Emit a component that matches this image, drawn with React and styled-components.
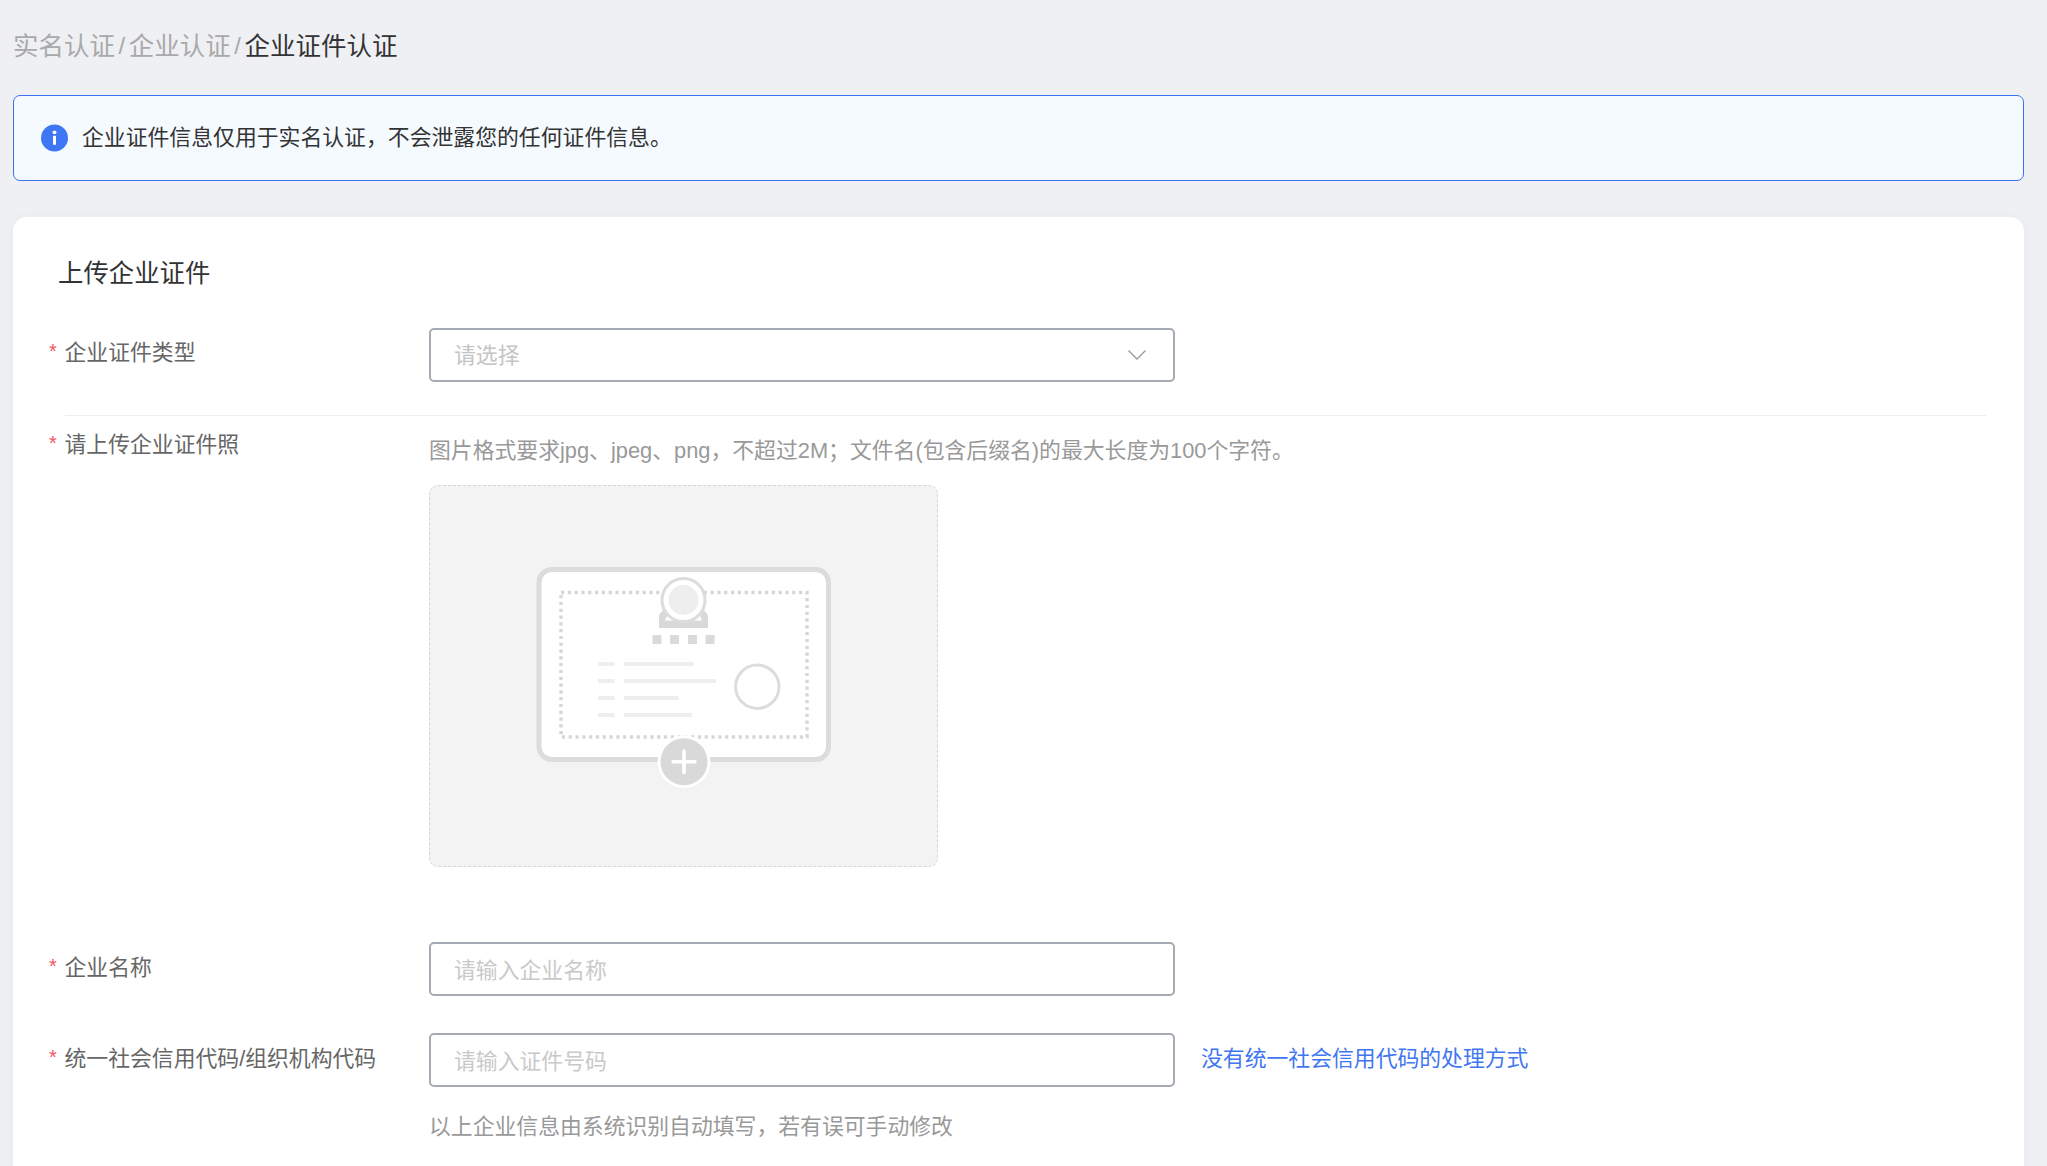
import React from "react";
import styled, { createGlobalStyle } from "styled-components";

const Global = createGlobalStyle`
  html, body { margin: 0; height: 100%; overflow: hidden; background: #eff0f4; }
  * { box-sizing: border-box; }
  body { font-family: "Liberation Sans", "Noto Sans CJK SC", sans-serif; }
`;

const Page = styled.div`
  height: 1166px;
  overflow: hidden;
  padding: 0 23px 0 13px;
  background: #eff0f4;
`;

const Breadcrumb = styled.nav`
  display: flex;
  align-items: center;
  height: 95px;
  padding-bottom: 3px;
  font-size: 25.5px;
  line-height: 34px;
`;

const Crumb = styled.span`
  color: ${(p) => (p.$current ? "#333333" : "#a9a9a9")};
`;

const Separator = styled.span`
  margin: 0 3.5px;
  color: #a9a9a9;
  font-size: 24px;
`;

const Alert = styled.div`
  display: flex;
  align-items: center;
  gap: 14px;
  height: 86px;
  padding: 0 0 5px 27px;
  background: #f5faff;
  border: 1px solid #3a72f2;
  border-radius: 7px;
  color: #333333;
  font-size: 21.85px;
`;

const InfoIcon = styled.svg`
  flex: none;
  margin-top: 5px;
`;

const Card = styled.section`
  margin-top: 36px;
  height: 1100px;
  padding: 38px 38px 0 36px;
  background: #ffffff;
  border-radius: 14px;
  box-shadow: 0 0 12px rgba(30, 40, 70, 0.035);
`;

const Title = styled.h2`
  margin: 1px 0 38px 9px;
  font-size: 25.4px;
  line-height: 34px;
  font-weight: 400;
  color: #333333;
`;

const FormRow = styled.div`
  display: grid;
  grid-template-columns: 380px 1fr;
  margin-top: ${(p) => p.$top || 0}px;
`;

const Label = styled.label`
  display: flex;
  gap: 7.5px;
  font-size: 21.83px;
  line-height: ${(p) => p.$line || 50}px;
  color: #666666;
  white-space: nowrap;
`;

const Star = styled.span`
  width: 8px;
  color: #f5555f;
  font-size: 20px;
  line-height: ${(p) => (p.$line || 50) - 4}px;
`;

const SelectBox = styled.div`
  display: flex;
  align-items: center;
  justify-content: space-between;
  width: 746px;
  height: 54px;
  padding: 0 26px 3px 23px;
  border: 2px solid #a6aab3;
  border-radius: 5px;
  background: #fff;
  color: #c4c4c4;
  font-size: 21.83px;
`;

const ChevronIcon = styled.svg`
  margin-top: 3px;
`;

const TextInput = styled.input`
  flex: none;
  display: block;
  width: 746px;
  height: 54px;
  padding: 4px 23px 0;
  border: 2px solid #a6aab3;
  border-radius: 5px;
  background: #fff;
  outline: none;
  font: inherit;
  font-size: 21.83px;
  color: #333;
  &::placeholder { color: #c9c9c9; opacity: 1; }
`;

const Divider = styled.hr`
  margin: 33px 0 4px 16px;
  height: 1px;
  border: 0;
  background: #eeeeee;
`;

const Hint = styled.p`
  margin: ${(p) => p.$top || 0}px 0 0;
  font-size: 21.83px;
  line-height: 30px;
  color: #999999;
`;

const UploadBox = styled.div`
  display: flex;
  align-items: center;
  justify-content: center;
  width: 509px;
  height: 382px;
  margin-top: 19px;
  background: #f3f3f3;
  border: 1px dashed #d6d6d6;
  border-radius: 9px;
`;

const Control = styled.div`
  display: flex;
  gap: 26px;
`;

const HelpLink = styled.a`
  font-size: 21.83px;
  line-height: 52px;
  color: #3f76f2;
  white-space: nowrap;
`;

const Info = () => (
  <InfoIcon width="27" height="28" viewBox="0 0 27 28">
    <circle cx="13.5" cy="14" r="13.5" fill="#3f76f6" />
    <circle cx="13.5" cy="8.3" r="1.9" fill="#fff" />
    <rect x="12" y="11.7" width="3" height="9" rx="0.5" fill="#fff" />
  </InfoIcon>
);

const Chevron = () => (
  <ChevronIcon width="20" height="12" viewBox="0 0 20 12" fill="none">
    <path d="M1.5 1.5 L10 10 L18.5 1.5" stroke="#999" strokeWidth="1.3" />
  </ChevronIcon>
);

const rows = [
  [664, 693.4],
  [681, 716],
  [698, 678.6],
  [715, 691.7],
];

const Licence = () => (
  <svg width="310" height="230" viewBox="529 561 310 230" fill="none">
    <rect x="539" y="569.5" width="289.5" height="190" rx="13" fill="#fff" stroke="#dcdcdc" strokeWidth="5" />
    <rect x="561" y="592.5" width="246" height="144.5" stroke="#d6d6d6" strokeWidth="3.4" strokeDasharray="3.2 3.6" />
    <polygon points="659,628 708,628 708,615 703,609 664,609 659,615" fill="#d9d9d9" />
    <polygon points="665,620.5 675,620.5 668,614" fill="#fff" />
    <polygon points="692,620.5 702,620.5 699,614" fill="#fff" />
    <circle cx="683.5" cy="600" r="21.5" fill="#fff" stroke="#dcdcdc" strokeWidth="3" />
    <circle cx="683.5" cy="600" r="15" fill="#eeeeee" />
    {[652.5, 670, 688, 705.5].map((x) => (
      <rect key={x} x={x} y="635" width="9" height="9" fill="#dadada" />
    ))}
    {rows.map(([y, end]) => (
      <g key={y} fill="#eeeeee">
        <rect x="598" y={y - 2} width="16.5" height="4" />
        <rect x="624" y={y - 2} width={end - 624} height="4" />
      </g>
    ))}
    <circle cx="757.3" cy="686.7" r="21.7" fill="#fff" stroke="#dcdcdc" strokeWidth="3" />
    <circle cx="684" cy="761.7" r="26.5" fill="#fff" />
    <circle cx="684" cy="761.7" r="23.5" fill="#d9d9d9" />
    <path d="M684 751 V772.5 M673 761.7 H695" stroke="#fff" strokeWidth="3.6" strokeLinecap="round" />
  </svg>
);

const Field = ({ line, children }) => (
  <Label $line={line}>
    <Star $line={line}>*</Star>
    {children}
  </Label>
);

export default function App() {
  return (
    <Page>
      <Global />
      <Breadcrumb>
        <Crumb>实名认证</Crumb>
        <Separator>/</Separator>
        <Crumb>企业认证</Crumb>
        <Separator>/</Separator>
        <Crumb $current>企业证件认证</Crumb>
      </Breadcrumb>
      <Alert>
        <Info />
        企业证件信息仅用于实名认证，不会泄露您的任何证件信息。
      </Alert>
      <Card>
        <Title>上传企业证件</Title>
        <FormRow>
          <Field>企业证件类型</Field>
          <SelectBox>
            请选择
            <Chevron />
          </SelectBox>
        </FormRow>
        <Divider />
        <FormRow>
          <Field>请上传企业证件照</Field>
          <div>
            <Hint $top={16}>图片格式要求jpg、jpeg、png，不超过2M；文件名(包含后缀名)的最大长度为100个字符。</Hint>
            <UploadBox>
              <Licence />
            </UploadBox>
          </div>
        </FormRow>
        <FormRow $top={75}>
          <Field line={52}>企业名称</Field>
          <TextInput placeholder="请输入企业名称" />
        </FormRow>
        <FormRow $top={37}>
          <Field line={52}>统一社会信用代码/组织机构代码</Field>
          <div>
            <Control>
              <TextInput placeholder="请输入证件号码" />
              <HelpLink>没有统一社会信用代码的处理方式</HelpLink>
            </Control>
            <Hint $top={25}>以上企业信息由系统识别自动填写，若有误可手动修改</Hint>
          </div>
        </FormRow>
      </Card>
    </Page>
  );
}
